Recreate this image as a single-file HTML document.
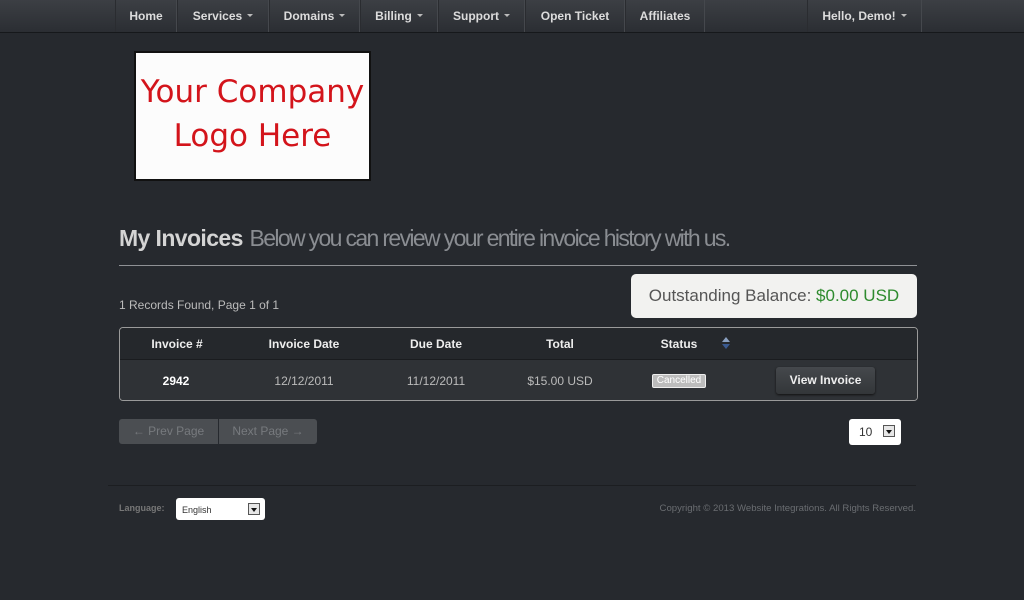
<!DOCTYPE html>
<html><head><meta charset="utf-8"><style>
*{margin:0;padding:0;box-sizing:border-box}
body{width:1024px;height:600px;background:#26292e;font-family:"Liberation Sans",sans-serif;color:#ccc;position:relative;overflow:hidden}
.nav{position:absolute;left:0;top:0;width:1024px;height:33px;background:linear-gradient(#3c3f44,#2b2e33);border-bottom:1px solid #16181b}
.nav a{position:absolute;top:0;height:32px;line-height:32px;font-size:12px;font-weight:bold;color:#dcdcdc;text-align:center;border-left:1px solid #2a2c30;border-right:1px solid #45484d}
.car{display:inline-block;width:0;height:0;border-left:3px solid transparent;border-right:3px solid transparent;border-top:3px solid #bbb;vertical-align:middle;margin-left:5px;margin-top:-2px}
.abs{position:absolute}
.logo{left:134px;top:51px;width:237px;height:130px;background:#fcfcfc;border:2px solid #111;color:#d3141b;font-family:"DejaVu Sans",sans-serif;font-size:31px;text-align:center;line-height:44px;padding-top:17px;letter-spacing:0}
h1{position:absolute;left:119px;top:225px;font-size:23px;font-weight:normal;color:#8a8d92;letter-spacing:-1.65px;white-space:nowrap}
h1 b{color:#d4d4d4;letter-spacing:-0.6px;margin-right:2px}
.hr{left:119px;top:265px;width:798px;height:1px;background:#8f9195}
.bal{left:631px;top:274px;width:286px;height:44px;background:#f2f2f0;border-radius:5px;color:#555;font-size:17px;line-height:44px;text-align:center}
.bal span{color:#2e8b2e}
.tbl{left:119px;top:327px;width:799px;height:74px;border:1px solid #9a9a9a;border-radius:4px;overflow:hidden}
.hd{height:32px;background:#25282c;border-bottom:1px solid #1a1c1f}
.rw{height:40px;background:#2f3236}
.c{position:absolute;font-size:12px;text-align:center;transform:translateX(-50%);white-space:nowrap}
.btn{left:776px;top:367px;width:99px;height:27px;background:linear-gradient(#45484c,#333639);border-radius:3px;color:#eee;font-size:12px;font-weight:bold;line-height:27px;text-align:center;box-shadow:0 1px 2px #111}
.pg{top:419px;height:25px;background:#4b4e52;color:#777a7e;font-size:12px;line-height:25px;text-align:center}
.sel{background:#fff;border-radius:3px;color:#333}
.arr{position:absolute;width:12px;height:12px;background:#e6e6e6;border:1px solid #555}
.arr:after{content:"";position:absolute;left:2px;top:4px;border-left:3px solid transparent;border-right:3px solid transparent;border-top:4px solid #111}
</style></head><body>
<div class="nav">
<a style="left:115px;width:62px">Home</a>
<a style="left:177px;width:92px">Services<i class="car"></i></a>
<a style="left:269px;width:91px">Domains<i class="car"></i></a>
<a style="left:360px;width:78px">Billing<i class="car"></i></a>
<a style="left:438px;width:87px">Support<i class="car"></i></a>
<a style="left:525px;width:100px">Open Ticket</a>
<a style="left:625px;width:80px">Affiliates</a>
<a style="left:807px;width:115px">Hello, Demo!<i class="car"></i></a>
</div>
<div class="abs logo">Your Company<br>Logo Here</div>
<h1><b>My Invoices</b> Below you can review your entire invoice history with us.</h1>
<div class="abs hr"></div>
<div class="abs" style="left:119px;top:298px;font-size:12px;color:#bbb">1 Records Found, Page 1 of 1</div>
<div class="abs bal">Outstanding Balance: <span>$0.00 USD</span></div>
<div class="abs tbl"><div class="hd"></div><div class="rw"></div></div>
<div class="c" style="left:177px;top:337px;font-weight:bold;color:#eee">Invoice #</div>
<div class="c" style="left:304px;top:337px;font-weight:bold;color:#eee">Invoice Date</div>
<div class="c" style="left:436px;top:337px;font-weight:bold;color:#eee">Due Date</div>
<div class="c" style="left:560px;top:337px;font-weight:bold;color:#eee">Total</div>
<div class="c" style="left:679px;top:337px;font-weight:bold;color:#eee">Status</div>
<div class="abs" style="left:722px;top:337px;width:0;height:0;border-left:4px solid transparent;border-right:4px solid transparent;border-bottom:5px solid #8aa0c0"></div>
<div class="abs" style="left:722px;top:344px;width:0;height:0;border-left:4px solid transparent;border-right:4px solid transparent;border-top:5px solid #3a5a90"></div>
<div class="c" style="left:176px;top:374px;font-weight:bold;color:#fff">2942</div>
<div class="c" style="left:304px;top:374px;color:#bbb">12/12/2011</div>
<div class="c" style="left:436px;top:374px;color:#bbb">11/12/2011</div>
<div class="c" style="left:560px;top:374px;color:#bbb">$15.00 USD</div>
<div class="abs" style="left:652px;top:374px;width:54px;height:14px;background:#bcbcbc;border:1px solid #eee;border-radius:2px;color:#fff;font-size:10px;line-height:12px;text-align:center">Cancelled</div>
<div class="abs btn">View Invoice</div>
<div class="abs pg" style="left:119px;width:99px;border-radius:3px 0 0 3px">← Prev Page</div>
<div class="abs pg" style="left:219px;width:98px;border-radius:0 3px 3px 0">Next Page →</div>
<div class="abs sel" style="left:849px;top:419px;width:52px;height:26px;font-size:12px;line-height:26px;padding-left:10px">10<span class="arr" style="right:6px;top:6px"></span></div>
<div class="abs" style="left:108px;top:485px;width:808px;height:1px;background:#1c1e21"></div>
<div class="abs" style="left:119px;top:503px;font-size:9px;font-weight:bold;color:#777">Language:</div>
<div class="abs sel" style="left:176px;top:498px;width:89px;height:22px;font-size:9px;line-height:24px;padding-left:6px">English<span class="arr" style="right:5px;top:5px"></span></div>
<div class="abs" style="right:108px;top:503px;font-size:9.6px;color:#6a6d71">Copyright © 2013 Website Integrations. All Rights Reserved.</div>
</body></html>
